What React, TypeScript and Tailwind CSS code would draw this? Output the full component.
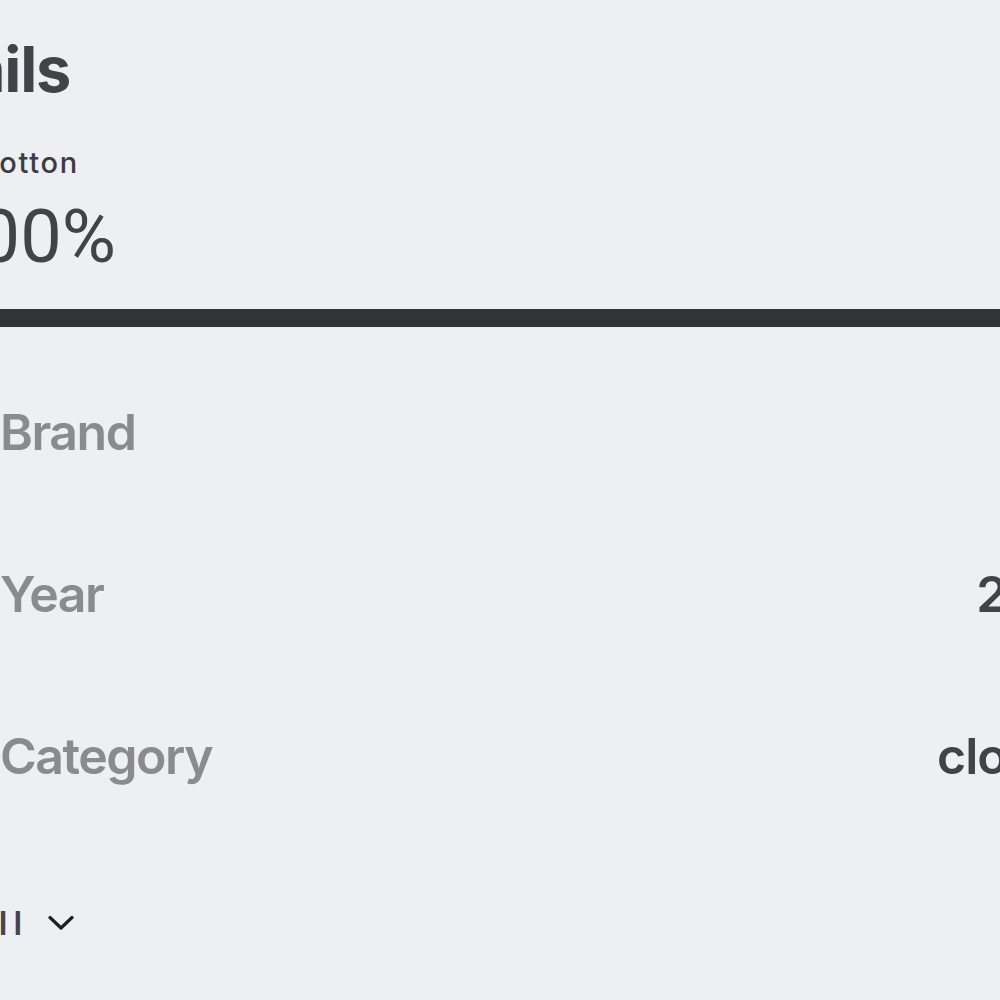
const rows = [
  { label: "Brand", value: "", valueClass: "" },
  { label: "Year", value: "2024", valueClass: "" },
  { label: "Category", value: "clothing", valueClass: "mr-[-25px]" },
];

export default function App() {
  return (
    <div className="w-[1000px] h-[1000px] overflow-hidden bg-[#eeeff3] font-['Inter','Noto_Sans',sans-serif] pt-[29px]">
      {/* Header, scrolled past its left edge */}
      <div className="flex justify-end w-[70px]">
        <h1 className="shrink-0 whitespace-nowrap text-[63px] leading-[80px] font-bold tracking-[-0.02em] text-[#424249]">Details</h1>
      </div>
      <div className="mt-[37px] flex justify-end w-[79px]">
        <p className="shrink-0 whitespace-nowrap text-[29px] leading-[34px] font-medium tracking-[0.06em] text-[#3c3c43]">Cotton</p>
      </div>
      <div className="mt-[15px] flex justify-end w-[116px]">
        <p className="shrink-0 whitespace-nowrap font-['Roboto',sans-serif] text-[74px] leading-[84px] font-normal text-[#424249]">100%</p>
      </div>

      {/* Divider */}
      <div className="mt-[30px] h-[18px] bg-[#333333]" />

      {/* Rows */}
      <div className="w-[1100px] pt-[80px] flex flex-col gap-[112px]">
        {rows.map((r) => (
          <div key={r.label} className="flex justify-between items-center h-[50px]">
            <span className="text-[50px] leading-[50px] font-semibold tracking-[-0.03em] text-[#8a8a8f]">{r.label}</span>
            <span className={`text-[50px] leading-[50px] font-semibold tracking-[-0.02em] text-[#424249] ${r.valueClass}`}>{r.value}</span>
          </div>
        ))}
      </div>

      {/* Show all */}
      <div className="mt-[122px] flex items-center">
        <div className="flex justify-end w-[22px]">
          <span className="shrink-0 whitespace-nowrap text-[33px] leading-[40px] font-semibold tracking-[0.18em] mr-[-6px] text-[#45454c]">Show all</span>
        </div>
        <svg className="ml-[26px]" width="26" height="16" viewBox="0 0 26 16" fill="none">
          <polyline points="2,2.5 13,13 24,2.5" stroke="#1f1f23" strokeWidth="3.2" strokeLinecap="round" strokeLinejoin="round" />
        </svg>
      </div>
    </div>
  );
}
